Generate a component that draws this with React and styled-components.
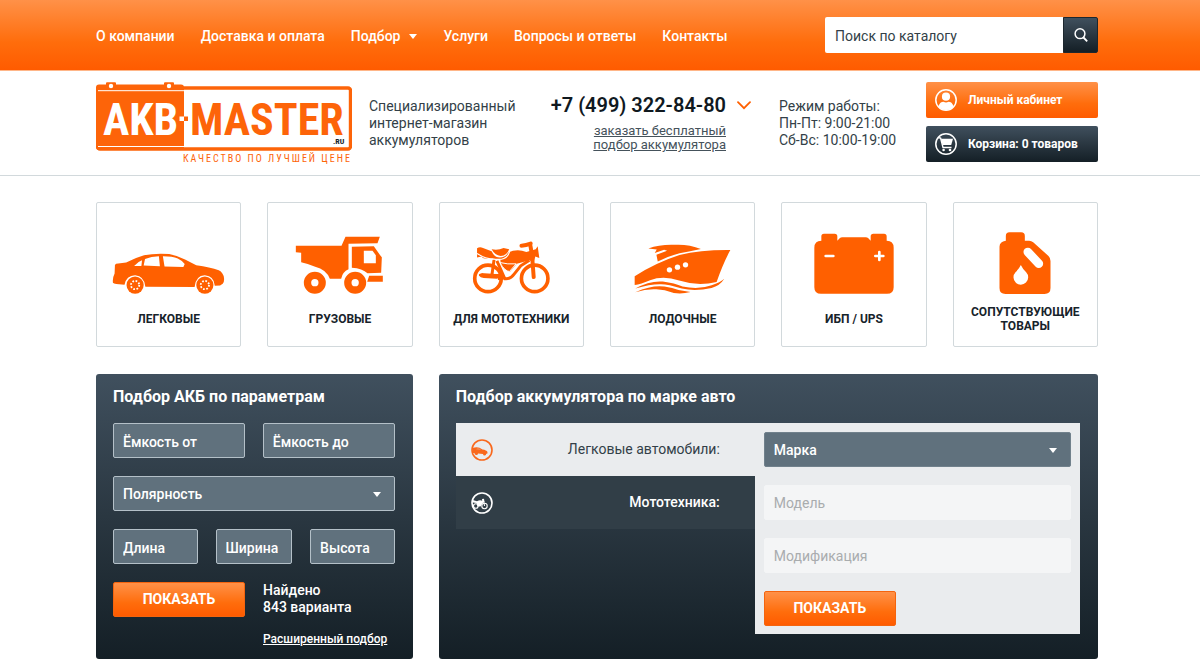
import React, { useState } from "react";
import styled, { createGlobalStyle, css } from "styled-components";

const GlobalStyle = createGlobalStyle`
  *, *::before, *::after { box-sizing: border-box; }
  body {
    margin: 0;
    background: #fff;
    color: #333f48;
    font: 400 14px/17px Roboto, "Open Sans", "Liberation Sans", sans-serif;
  }
  button, input, select { font: inherit; }
`;

const orange = "linear-gradient(#ff9148, #ff6d0c 60%, #ff5b00)";
const steel = "linear-gradient(#40505e, #2a3741 50%, #141f26)";

const Wrap = styled.div`
  padding: 0 102px 0 96px;
`;

/* ---------- top bar ---------- */
const TopBar = styled.header`
  background: ${orange};
  border-bottom: 1px solid #ffb688;
`;
const TopInner = styled(Wrap)`
  display: flex;
  align-items: center;
  justify-content: space-between;
  height: 70px;
`;
const Nav = styled.nav`
  display: flex;
  gap: 26px;
  padding-top: 2px;
  white-space: nowrap;
`;
const NavLink = styled.a`
  display: flex;
  align-items: center;
  gap: 9px;
  color: #fff;
  font-size: 14px;
  font-weight: 500;
  text-decoration: none;
`;
const Caret = styled.span`
  border: 4px solid transparent;
  border-top: 5px solid #fff;
  border-bottom: 0;
`;
const Search = styled.form`
  display: flex;
  width: 273px;
  height: 36px;
`;
const SearchInput = styled.input`
  flex: 1;
  min-width: 0;
  padding: 2px 10px 0;
  border: 0;
  border-radius: 2px 0 0 2px;
  background: #fff;
  color: #333f48;
  &::placeholder { color: #333f48; opacity: 1; }
`;
const SearchButton = styled.button`
  display: grid;
  place-items: center;
  width: 35px;
  padding: 0;
  border: 1px solid #1d272e;
  border-radius: 0 2px 2px 0;
  background: ${steel};
  cursor: pointer;
`;

/* ---------- header info ---------- */
const InfoBar = styled.div`
  border-bottom: 1px solid #d2d9dc;
`;
const InfoInner = styled(Wrap)`
  display: flex;
  align-items: flex-start;
  height: 104px;
  padding-top: 11px;
`;
const LogoLink = styled.a`
  flex: none;
  display: block;
  height: 83px;
`;
const Slogan = styled.p`
  width: 166px;
  margin: 16px 0 0 17px;
`;
const PhoneBlock = styled.div`
  display: grid;
  grid-template-columns: 191px 14px;
  column-gap: 11px;
  align-items: center;
  justify-items: end;
  margin-top: 11px;
`;
const Phone = styled.a`
  color: #10191f;
  font-size: 20px;
  font-weight: 600;
  line-height: 24px;
  text-decoration: none;
  white-space: nowrap;
`;
const CallLink = styled.a`
  margin-top: 7px;
  color: #45525b;
  font-size: 13px;
  line-height: 14px;
  text-align: right;
`;
const More = styled.button`
  display: grid;
  padding: 0;
  border: 0;
  background: none;
  cursor: pointer;
`;
const Hours = styled.p`
  margin: 16px 0 0 28px;
  white-space: nowrap;
`;
const Account = styled.div`
  display: grid;
  gap: 8px;
  width: 172px;
  margin-left: auto;
`;
const AccountLink = styled.a`
  display: flex;
  align-items: center;
  gap: 11px;
  height: 36px;
  padding: 0 9px;
  border-radius: 2px;
  background: ${(p) => (p.$dark ? steel : orange)};
  color: #fff;
  font-size: 12px;
  font-weight: 700;
  text-decoration: none;
  white-space: nowrap;
`;

/* ---------- catalogue ---------- */
const Main = styled.main`
  display: grid;
  grid-template-columns: repeat(6, 1fr);
  gap: 27px 26px;
  padding: 26px 102px 5px 96px;
`;
const Card = styled.a`
  display: flex;
  flex-direction: column;
  align-items: center;
  height: 145px;
  border: 1px solid #d2d9dc;
  border-radius: 2px;
  color: #17232b;
  font-size: 12px;
  font-weight: 700;
  line-height: 14px;
  text-align: center;
  text-transform: uppercase;
  text-decoration: none;
`;
const CardIcon = styled.span`
  display: flex;
  align-items: flex-end;
  height: 91px;
`;
const CardLabel = styled.span`
  display: flex;
  align-items: center;
  height: 28px;
  margin-top: 11px;
`;

/* ---------- panels ---------- */
const Panel = styled.section`
  grid-column: span ${(p) => p.$span};
  padding: 13px 18px 11px 17px;
  border-radius: 3px;
  background: ${steel};
  color: #fff;
`;
const PanelTitle = styled.h2`
  margin: 0 0 16px;
  font-size: 16px;
  font-weight: 700;
  line-height: 20px;
`;
const Fields = styled.form`
  display: grid;
  gap: 18px;
`;
const FieldRow = styled.div`
  display: grid;
  grid-template-columns: ${(p) => p.$columns || "1fr 1fr"};
  gap: 18px;
`;
const control = css`
  width: 100%;
  min-width: 0;
  height: 35px;
  padding: 2px 9px 0;
  border: 1px solid #b4c0c8;
  border-radius: 2px;
  background: #60717d;
  color: #fff;
  font-weight: 500;
`;
const Field = styled.input`
  ${control}
  &::placeholder { color: #fff; opacity: 1; }
`;
const SelectBox = styled.div`
  position: relative;
`;
const SelectControl = styled.select`
  ${control}
  display: block;
  appearance: none;
  ${(p) => p.$plain && css`border-color: #71818c;`}
  &:disabled {
    border-color: #f4f5f6;
    background: #f4f5f6;
    color: #a9acae;
    font-weight: 400;
    opacity: 1;
  }
`;
const SelectCaret = styled(Caret)`
  position: absolute;
  top: 16px;
  right: 14px;
  pointer-events: none;
`;
const Submit = styled.button`
  width: 132px;
  height: 35px;
  padding: 0;
  border: 1px solid #f4640e;
  border-radius: 2px;
  background: ${orange};
  color: #fff;
  font-weight: 700;
  text-transform: uppercase;
  cursor: pointer;
`;
const Result = styled.p`
  margin: 0;
  font-weight: 500;
`;
const Advanced = styled.a`
  display: block;
  margin-top: 15px;
  color: #fff;
  font-size: 12px;
  font-weight: 500;
  white-space: nowrap;
`;
const Picker = styled.div`
  display: grid;
  grid-template-columns: 299fr 325fr;
`;
const Tabs = styled.div``;
const Tab = styled.button`
  display: flex;
  align-items: center;
  justify-content: space-between;
  width: 100%;
  height: 53px;
  padding: 0 35px 0 15px;
  border: 0;
  background: ${(p) => (p.$active ? "#eaecee" : "#313e47")};
  color: ${(p) => (p.$active ? "#333f48" : "#fff")};
  font-weight: ${(p) => (p.$active ? 400 : 500)};
  cursor: pointer;
`;
const PickerForm = styled.form`
  display: grid;
  gap: 18px;
  padding: 9px 9px 8px;
  background: #eaecee;
`;

/* ---------- drawings ---------- */
const LogoText = styled.text`
  font-family: "Roboto Condensed", "Liberation Sans Narrow", sans-serif;
  font-size: ${(p) => p.$size}px;
  font-weight: ${(p) => p.$weight || 700};
`;

const Logo = () => (
  <svg width="256" height="83" viewBox="0 0 256 83" role="img" aria-label="AKB-MASTER.ru">
    <rect x="1.5" y="6" width="253" height="61" rx="2.5" fill="#fff" stroke="#fd6409" strokeWidth="3.4" />
    <path d="M3 2.5h7V1.2Q10 .3 11 .3h8q1 0 1 .9v1.3h48V1.2q0-.9 1-.9h8q1 0 1 .9v1.3h7q3 0 3 3V68H3q-3 0-3-3V5.500q0-3 3-3Z" fill="#fd6409" />
    <path d="M2 8.700H88M2 64.500H88" stroke="#fff" strokeWidth="1" />
    <circle cx="15" cy="4" r="2.200" fill="#fff" />
    <circle cx="73" cy="4" r="2.200" fill="#fff" />
    <path d="M83.500 34.500h4.500v4.500h-4.500Z" fill="#fff" />
    <path d="M88 34.500h4v4.500h-4Z" fill="#fd6409" />
    <LogoText x="7" y="53" fill="#fff" $size={44}>AKB</LogoText>
    <LogoText x="94" y="53" fill="#fd6409" $size={44}>MASTER</LogoText>
    <LogoText x="237" y="62" fill="#17232b" $size={8}>.RU</LogoText>
    <LogoText x="87" y="80" fill="#fd6409" $size={10} $weight={400} letterSpacing="2">КАЧЕСТВО ПО ЛУЧШЕЙ ЦЕНЕ</LogoText>
  </svg>
);

const CarShape = () => (
  <>
    <path d="M66 264Q64 250 71 236L72 210Q74 206 82 206L106 203Q132 189 160 181Q192 174 236 177Q262 182 284 194L318 211Q360 217 386 226Q400 233 402 250Q403 262 398 267L390 272L374 273Q372 243 344 241Q316 242 313 277L164 276Q161 243 133 241Q106 242 101 270L76 268Q68 267 66 264Z" fill="currentColor" />
    <path d="M130 213Q140 201 154 196L152 213ZM159 211L163 192Q182 184 205 184L208 214L159 212ZM217 184Q246 184 262 191Q276 198 283 207L279 216L222 215Z" fill="#fff" />
    {[133, 344].map((x) => (
      <g key={x}>
        <circle cx={x} cy="271" r="26" fill="currentColor" />
        <circle cx={x} cy="271" r="12.500" fill="none" stroke="#fff" strokeWidth="5.500" strokeDasharray="5 4.820" />
      </g>
    ))}
  </>
);

const MotoShape = () => (
  <>
    <g fill="none" stroke="currentColor">
      <circle cx="171" cy="251" r="40" strokeWidth="11" />
      <circle cx="312" cy="251" r="40" strokeWidth="11" />
      <path d="M299 152L304 180L309 247" strokeWidth="12" strokeLinecap="round" />
      <path d="M272 152Q286 152 300 146" strokeWidth="12" strokeLinecap="round" />
      <path d="M189 197L183 240M148 241L200 242" strokeWidth="9" strokeLinecap="round" />
      <path d="M198 198L222 252Q238 254 250 238L270 213L296 196" strokeWidth="9" />
    </g>
    <path d="M138 160Q146 154 156 159L182 169Q190 188 207 188Q225 187 232 173Q258 160 287 171L315 163L321 154L326 189L314 185L309 202L296 196Q272 202 258 207L238 230Q220 228 209 207L209 196L184 190Q158 195 151 185L138 188Z" fill="currentColor" />
    <path d="M182 163Q202 167 218 159L235 163Q228 183 209 183Q192 181 182 163Z" fill="currentColor" />
    <path d="M138 176L154 185Q178 196 212 193Q230 190 236 171" fill="none" stroke="#fff" strokeWidth="3.500" />
    <path d="M207 203Q230 209 256 207L236 230Q222 230 207 203Z" fill="currentColor" stroke="#fff" strokeWidth="3" />
    <path d="M145 242Q149 234 157 235L201 238L198 252L158 250Q147 248 145 242ZM193 238L212 236L226 250Q216 258 202 256Z" fill="currentColor" />
  </>
);

const TruckShape = () => (
  <>
    <path d="M618 153L755 153L767 126L870 126L863 146L776 147L776 224Q758 232 754 252L720 252Q709 224 676 216Q652 207 634 203L634 174L618 173Z" fill="currentColor" />
    <path d="M786 156L852 155L871 182L876 188L874 234L833 236Q818 221 786 219Z" fill="currentColor" />
    <path d="M822 168L848 168L858 182L858 206L822 206Z" fill="#fff" />
    <path d="M838 243H879V261H832Z" fill="currentColor" />
    {[675, 796].map((x) => (
      <circle key={x} cx={x} cy="264" r="22" fill="none" stroke="currentColor" strokeWidth="22" />
    ))}
  </>
);

const BoatShape = () => (
  <>
    <path d="M655 162Q690 149 735 151Q776 149 812 164L776 171Q728 178 683 201L679 181L711 169L702 166L674 176L680 165Z" fill="currentColor" />
    <path d="M614 245Q680 204 748 182Q813 166 900 167Q880 203 859 262Q803 276 747 258Q700 242 660 257Q632 269 614 271Z" fill="currentColor" />
    <path d="M616 282Q658 258 698 261Q734 266 757 276Q806 286 844 272Q870 264 882 253Q868 275 844 280Q796 291 755 282Q714 269 693 269Q662 268 616 282Z" fill="currentColor" />
    <path d="M616 293Q666 271 703 276Q728 280 745 286L781 292Q755 299 731 295Q703 285 679 284Q650 282 616 293Z" fill="currentColor" />
    <circle cx="718" cy="226" r="8" fill="#fff" />
    <circle cx="742" cy="218" r="8" fill="#fff" />
    <circle cx="766" cy="211" r="8" fill="#fff" />
  </>
);

const BatteryShape = () => (
  <>
    <path d="M153 139V126Q153 118 161 118H193Q201 118 201 126V139L208 131Q211 128 216 128H286Q291 128 294 131L301 139V126Q301 118 309 118H341Q349 118 349 126V139Q370 139 370 160V278Q370 298 350 298H152Q132 298 132 278V160Q132 139 153 139Z" fill="currentColor" />
    <path d="M166 184.500H189M315 184.500H339M327 172.500V196.500" stroke="#fff" strokeWidth="8" strokeLinecap="round" />
  </>
);

const CanShape = () => (
  <>
    <path d="M707 138V124Q707 113 718 113H753Q764 113 764 124V138H777Q784 138 789 143L835 184Q841 190 841 199V280Q841 298 823 298H706Q688 298 688 280V156Q688 141 707 138Z" fill="currentColor" />
    <path d="M773 172L806 207" stroke="#fff" strokeWidth="26" strokeLinecap="round" />
    <path d="M752 211Q757 222 768 233A22 22 0 1 1 736 233Q747 222 752 211Z" fill="#fff" />
  </>
);

const Icon = styled.svg`
  display: block;
  color: ${(p) => p.$color || "#ff6000"};
`;

const categories = [
  { label: ["Легковые"], box: "64 174 340 124", w: 113, h: 41, Shape: CarShape },
  { label: ["Грузовые"], box: "616 124 266 174", w: 89, h: 58, Shape: TruckShape },
  { label: ["Для мототехники"], box: "124 138 236 160", w: 79, h: 53, Shape: MotoShape },
  { label: ["Лодочные"], box: "612 146 290 152", w: 97, h: 51, Shape: BoatShape },
  { label: ["ИБП / UPS"], box: "131 116 240 182", w: 80, h: 61, Shape: BatteryShape },
  { label: ["Сопутствующие", "товары"], box: "687 112 155 186", w: 52, h: 62, Shape: CanShape },
];

const UserIcon = () => (
  <Icon $color="#fff" width="22" height="22" viewBox="0 0 22 22" aria-hidden="true">
    <circle cx="11" cy="11" r="10.200" fill="none" stroke="currentColor" strokeWidth="1.500" />
    <circle cx="11" cy="7.700" r="4.100" fill="currentColor" />
    <path d="M3.500 17.200Q5 12.800 8.500 12.800Q11 14.400 13.500 12.800Q17 12.800 18.500 17.200Q15.500 21 11 21Q6.500 21 3.500 17.200Z" fill="currentColor" />
  </Icon>
);
const CartIcon = () => (
  <Icon $color="#fff" width="22" height="22" viewBox="0 0 22 22" aria-hidden="true">
    <circle cx="11" cy="11" r="10.200" fill="none" stroke="currentColor" strokeWidth="1.500" />
    <path d="M2.800 4.500L5.600 5L8 14.500H16.500" fill="none" stroke="currentColor" strokeWidth="1.400" />
    <path d="M6 5.800H18L16.200 12H7.600Z" fill="currentColor" />
    <circle cx="8.600" cy="17" r="1.300" fill="currentColor" />
    <circle cx="15" cy="17" r="1.300" fill="currentColor" />
  </Icon>
);
const TabCarIcon = ({ color }) => (
  <Icon $color={color} width="22" height="22" viewBox="0 0 22 22" aria-hidden="true">
    <circle cx="11" cy="11" r="10" fill="none" stroke="currentColor" strokeWidth="1.600" />
    <path d="M1.500 9.300Q5 7.500 8.500 8.800L11.500 10.500Q15.500 11 16.500 13L16.300 14.700H15.200A1.600 1.600 0 0 1 12 14.900L7 14.500A1.700 1.700 0 0 1 3.600 14.200L1.500 13.800Z" fill="currentColor" />
    <path d="M5 10.300L6.200 9.600H8.200L10 10.800Z" fill="#eaecee" opacity=".4" />
  </Icon>
);
const TabMotoIcon = ({ color }) => (
  <Icon $color={color} width="22" height="22" viewBox="0 0 22 22" aria-hidden="true">
    <circle cx="11" cy="11" r="10" fill="none" stroke="currentColor" strokeWidth="1.600" />
    <circle cx="13.500" cy="14" r="2.700" fill="none" stroke="currentColor" strokeWidth="1.100" />
    <circle cx="4.800" cy="14" r="2.300" fill="none" stroke="currentColor" strokeWidth="1.100" />
    <path d="M1.500 8L6 9.200Q9 7.500 11.200 8.700L11 7L13 6.800L13.500 10L12 10.800L9.500 14.500H6.500L5.500 11L2 10.500Z" fill="currentColor" />
    <path d="M12.700 9L13.500 14" stroke="currentColor" strokeWidth="1" />
  </Icon>
);

function Select({ label, caret, ...rest }) {
  return (
    <SelectBox>
      <SelectControl aria-label={label} {...rest}>
        <option>{label}</option>
      </SelectControl>
      {caret && <SelectCaret />}
    </SelectBox>
  );
}

const links = ["О компании", "Доставка и оплата", "Подбор", "Услуги", "Вопросы и ответы", "Контакты"];

export default function App() {
  const [tab, setTab] = useState(0);
  const stop = (e) => e.preventDefault();
  return (
    <>
      <GlobalStyle />
      <TopBar>
        <TopInner>
          <Nav>
            {links.map((text) => (
              <NavLink href="#" key={text}>
                {text}
                {text === "Подбор" && <Caret />}
              </NavLink>
            ))}
          </Nav>
          <Search onSubmit={stop}>
            <SearchInput aria-label="Поиск по каталогу" placeholder="Поиск по каталогу" />
            <SearchButton aria-label="Найти">
              <Icon $color="#fff" width="14" height="14" viewBox="0 0 14 14" aria-hidden="true">
                <circle cx="6" cy="5.700" r="4.900" fill="none" stroke="currentColor" strokeWidth="1.500" />
                <path d="M9.500 9.500L13.200 13.300" stroke="currentColor" strokeWidth="1.800" />
              </Icon>
            </SearchButton>
          </Search>
        </TopInner>
      </TopBar>

      <InfoBar>
        <InfoInner>
          <LogoLink href="#"><Logo /></LogoLink>
          <Slogan>Специализированный<br />интернет-магазин<br />аккумуляторов</Slogan>
          <PhoneBlock>
            <Phone href="tel:+74993228480">+7 (499) 322-84-80</Phone>
            <More aria-label="Другие телефоны">
              <Icon width="14" height="9" viewBox="0 0 14 9" aria-hidden="true">
                <path d="M1 1.200L7 7.200L13 1.200" fill="none" stroke="currentColor" strokeWidth="1.800" strokeLinecap="round" />
              </Icon>
            </More>
            <CallLink href="#">заказать бесплатный<br />подбор аккумулятора</CallLink>
          </PhoneBlock>
          <Hours>Режим работы:<br />Пн-Пт: 9:00-21:00<br />Сб-Вс: 10:00-19:00</Hours>
          <Account>
            <AccountLink href="#"><UserIcon />Личный кабинет</AccountLink>
            <AccountLink href="#" $dark><CartIcon />Корзина: 0 товаров</AccountLink>
          </Account>
        </InfoInner>
      </InfoBar>

      <Main>
        {categories.map(({ label, box, w, h, Shape }) => (
          <Card href="#" key={label[0]}>
            <CardIcon>
              <Icon width={w} height={h} viewBox={box} aria-hidden="true"><Shape /></Icon>
            </CardIcon>
            <CardLabel>
              <span>{label[0]}{label[1] && <><br />{label[1]}</>}</span>
            </CardLabel>
          </Card>
        ))}

        <Panel $span={2}>
          <PanelTitle>Подбор АКБ по параметрам</PanelTitle>
          <Fields onSubmit={stop}>
            <FieldRow>
              <Field aria-label="Ёмкость от" placeholder="Ёмкость от" />
              <Field aria-label="Ёмкость до" placeholder="Ёмкость до" />
            </FieldRow>
            <Select label="Полярность" caret />
            <FieldRow $columns="85fr 77fr 85fr">
              <Field aria-label="Длина" placeholder="Длина" />
              <Field aria-label="Ширина" placeholder="Ширина" />
              <Field aria-label="Высота" placeholder="Высота" />
            </FieldRow>
            <FieldRow>
              <Submit>Показать</Submit>
              <div>
                <Result>Найдено<br />843 варианта</Result>
                <Advanced href="#">Расширенный подбор</Advanced>
              </div>
            </FieldRow>
          </Fields>
        </Panel>

        <Panel $span={4}>
          <PanelTitle>Подбор аккумулятора по марке авто</PanelTitle>
          <Picker>
            <Tabs>
              <Tab $active={tab === 0} onClick={() => setTab(0)}>
                <TabCarIcon color={tab === 0 ? "#f9681c" : "#fff"} />
                Легковые автомобили:
              </Tab>
              <Tab $active={tab === 1} onClick={() => setTab(1)}>
                <TabMotoIcon color={tab === 1 ? "#f9681c" : "#fff"} />
                Мототехника:
              </Tab>
            </Tabs>
            <PickerForm onSubmit={stop}>
              <Select label="Марка" caret $plain />
              <Select label="Модель" disabled />
              <Select label="Модификация" disabled />
              <Submit>Показать</Submit>
            </PickerForm>
          </Picker>
        </Panel>
      </Main>
    </>
  );
}
